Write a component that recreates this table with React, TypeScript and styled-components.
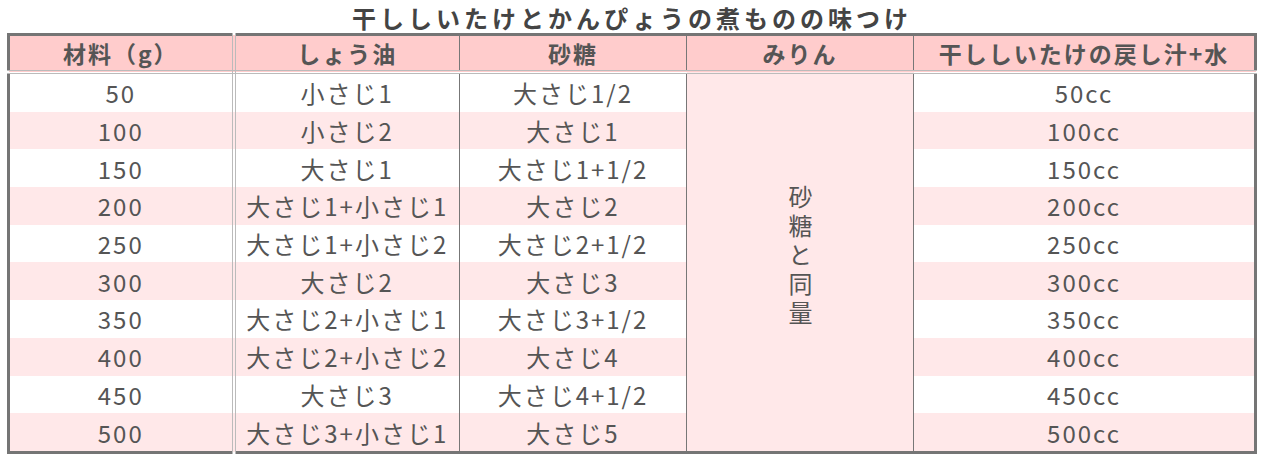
import styled, { createGlobalStyle } from "styled-components";

const GlobalStyle = createGlobalStyle`
  html, body {
    margin: 0;
    padding: 0;
    background: #ffffff;
  }
  body {
    font-family: "Noto Sans CJK JP", "Noto Sans", sans-serif;
    color: #555555;
  }
`;

const rows: [string, string, string, string][] = [
  ["50", "小さじ1", "大さじ1/2", "50cc"],
  ["100", "小さじ2", "大さじ1", "100cc"],
  ["150", "大さじ1", "大さじ1+1/2", "150cc"],
  ["200", "大さじ1+小さじ1", "大さじ2", "200cc"],
  ["250", "大さじ1+小さじ2", "大さじ2+1/2", "250cc"],
  ["300", "大さじ2", "大さじ3", "300cc"],
  ["350", "大さじ2+小さじ1", "大さじ3+1/2", "350cc"],
  ["400", "大さじ2+小さじ2", "大さじ4", "400cc"],
  ["450", "大さじ3", "大さじ4+1/2", "450cc"],
  ["500", "大さじ3+小さじ1", "大さじ5", "500cc"],
];

export default function App() {
  return (
    <>
      <GlobalStyle />
      <Page>
        <Title>干ししいたけとかんぴょうの煮ものの味つけ</Title>
        <Table>
          <colgroup>
            <col style={{ width: 225 }} />
            <col style={{ width: 226 }} />
            <col style={{ width: 227 }} />
            <col style={{ width: 227 }} />
            <col />
          </colgroup>
          <thead>
            <tr>
              <Head $double>材料（g）</Head>
              <Head>しょう油</Head>
              <Head>砂糖</Head>
              <Head>みりん</Head>
              <Head>干ししいたけの戻し汁+水</Head>
            </tr>
          </thead>
          <tbody>
            {rows.map(([g, soy, sugar, water], i) => (
              <Row key={g} $shaded={i % 2 === 1}>
                <Cell $double>{g}</Cell>
                <Cell>{soy}</Cell>
                <Cell>{sugar}</Cell>
                {i === 0 && (
                  <MergedCell rowSpan={rows.length}>
                    <Vertical>砂糖と同量</Vertical>
                  </MergedCell>
                )}
                <Cell>{water}</Cell>
              </Row>
            ))}
          </tbody>
        </Table>
      </Page>
    </>
  );
}

const Page = styled.div`
  padding: 0 7px;
  width: 1250px;
`;

const Title = styled.div`
  height: 33px;
  line-height: 35px;
  text-align: center;
  font-size: 24px;
  font-weight: bold;
  letter-spacing: 4px;
  color: #444444;
`;

const Table = styled.table`
  width: 1250px;
  border-collapse: collapse;
  table-layout: fixed;
  border: 3px solid #757575;
`;

const Head = styled.th<{ $double?: boolean }>`
  height: 34px;
  padding: 0;
  background: #ffcccc;
  font-size: 23px;
  font-weight: bold;
  letter-spacing: 2px;
  color: #555555;
  text-align: center;
  vertical-align: middle;
  line-height: 34px;
  border-bottom: 4px double #bbbbbb;
  border-right: ${(p) => (p.$double ? "4px double #bbbbbb" : "1px solid #777777")};
`;

const Row = styled.tr<{ $shaded: boolean }>`
  background: ${(p) => (p.$shaded ? "#ffe8e9" : "#ffffff")};
`;

const Cell = styled.td<{ $double?: boolean }>`
  height: 37.7px;
  padding: 0;
  font-size: 24px;
  letter-spacing: 2px;
  line-height: 37px;
  text-align: center;
  vertical-align: middle;
  white-space: nowrap;
  border-right: ${(p) => (p.$double ? "4px double #bbbbbb" : "1px solid #777777")};
`;

const MergedCell = styled.td`
  padding: 0;
  background: #ffe8e9;
  text-align: center;
  vertical-align: middle;
  border-right: 1px solid #777777;
`;

const Vertical = styled.div`
  display: inline-block;
  writing-mode: vertical-rl;
  font-size: 24px;
  letter-spacing: 5px;
  line-height: 1;
  margin-top: -4px;
`;
